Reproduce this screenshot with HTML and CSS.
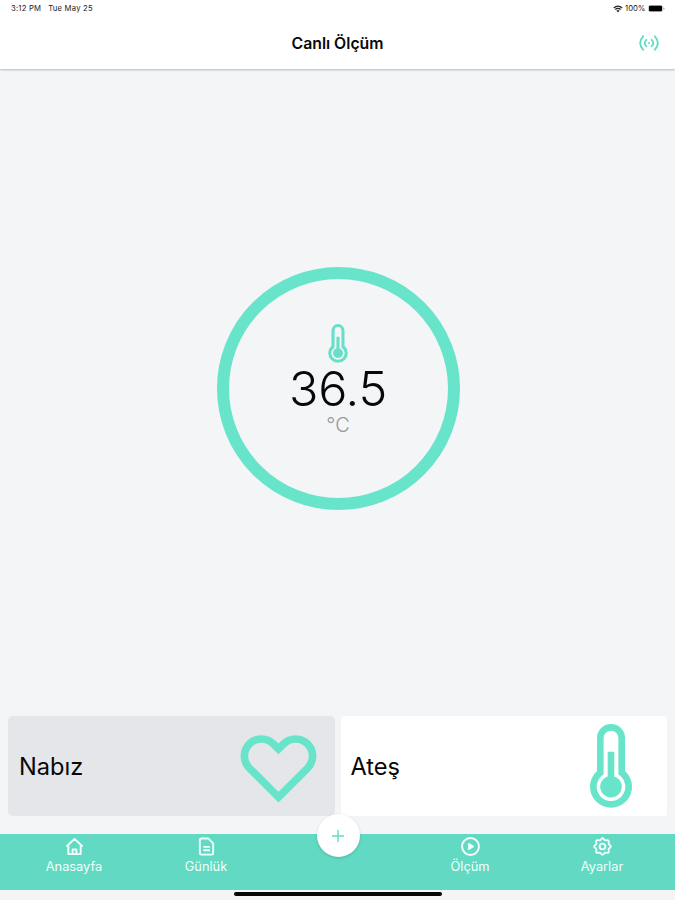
FILE: index.html
```html
<!DOCTYPE html>
<html lang="tr">
<head>
<meta charset="utf-8">
<title>Canlı Ölçüm</title>
<link rel="stylesheet" href="styles.css">
</head>
<body>
<svg class="defs" width="0" height="0">
  <symbol id="thermometer" viewBox="0 0 42 84">
    <path d="M21 0A14 14 0 0 0 7 14V47A21 21 0 1 0 35 47V14A14 14 0 0 0 21 0ZM21 6.7A7.4 7.4 0 0 1 28.4 14V50.5A14.3 14.3 0 1 1 13.6 50.5V14A7.4 7.4 0 0 1 21 6.7Z" fill-rule="evenodd"/>
    <path d="M17.7 27.7H24.3V52.4A10.8 10.8 0 1 1 17.7 52.4Z"/>
  </symbol>
</svg>
<div class="screen">
  <header class="header">
    <div class="status">
      <div class="status-left"><span class="time">3:12 PM</span><span class="date">Tue May 25</span></div>
      <div class="status-right">
        <svg class="wifi" viewBox="0 0 10 8"><path d="M5 7.5L3.4 5.5Q5 4.3 6.6 5.5Z" fill="#222"/><path d="M.8 2.9Q5-.7 9.2 2.9M2.3 4.5Q5 2.4 7.7 4.5" fill="none" stroke="#222" stroke-width="1.3"/></svg>
        <span class="percent">100%</span>
        <svg class="battery" viewBox="0 0 17 7"><rect x=".3" y=".3" width="14.4" height="6.4" rx="1.5" fill="#bbb"/><rect x="1" y=".8" width="13" height="5.4" rx="1"/><rect x="15.4" y="2.4" width="1" height="2.2" rx=".5" fill="#999"/></svg>
      </div>
    </div>
    <div class="titlebar">
      <h1 class="title">Canlı Ölçüm</h1>
      <svg class="signal" viewBox="0 0 20 16"><path d="M4.1 1.3Q-1.8 8 4.1 14.7M15.9 1.3Q21.8 8 15.9 14.7M7.3 4.8Q4 8 7.3 11.2M12.7 4.8Q16 8 12.7 11.2"/><circle cx="10" cy="8" r="1"/></svg>
    </div>
  </header>

  <main class="main">
    <div class="gauge">
      <svg class="gauge-icon"><use href="#thermometer"/></svg>
      <div class="value">36.5</div>
      <div class="unit">°C</div>
    </div>
  </main>

  <section class="cards">
    <div class="card card-pulse">
      <span class="card-label">Nabız</span>
      <svg class="heart" viewBox="0 0 24 24"><path d="M4.318 6.318a4.5 4.5 0 0 0 0 6.364L12 20.364l7.682-7.682a4.5 4.5 0 0 0-6.364-6.364L12 7.636l-1.318-1.318a4.5 4.5 0 0 0-6.364 0z"/></svg>
    </div>
    <div class="card card-temp">
      <span class="card-label">Ateş</span>
      <svg class="thermo"><use href="#thermometer"/></svg>
    </div>
  </section>

  <nav class="nav">
    <div class="tab"><svg class="tab-icon" viewBox="0 0 20 20"><path d="M1.5 10L10 2l8.5 8M3.5 9v9h13V9M8 17.5v-4.3h4v4.3"/></svg><span>Anasayfa</span></div>
    <div class="tab"><svg class="tab-icon" viewBox="0 0 20 20"><path d="M4.5 1.5h7.3l5.2 5.2V17a1.5 1.5 0 0 1-1.5 1.5h-11A1.5 1.5 0 0 1 3 17V3a1.5 1.5 0 0 1 1.5-1.5zM6.6 10.4h7M6.6 14h7"/></svg><span>Günlük</span></div>
    <div class="tab tab-add"><div class="add"><svg viewBox="0 0 12 12"><path d="M6 0V12M0 6H12"/></svg></div></div>
    <div class="tab"><svg class="tab-icon" viewBox="0 0 20 20"><circle cx="10" cy="10" r="8.9"/><path d="M8.3 7.4L12.6 10l-4.3 2.6z" fill="currentColor"/></svg><span>Ölçüm</span></div>
    <div class="tab"><svg class="tab-icon" viewBox="0 0 20 20"><path d="M8 3Q10-.5 12 3Q12.6 3.7 13.6 3.5Q17.5 2.5 16.5 6.4Q16.3 7.4 17 8Q20.5 10 17 12Q16.3 12.6 16.5 13.6Q17.5 17.5 13.6 16.5Q12.6 16.3 12 17Q10 20.5 8 17Q7.4 16.3 6.4 16.5Q2.5 17.5 3.5 13.6Q3.7 12.6 3 12Q-.5 10 3 8Q3.7 7.4 3.5 6.4Q2.5 2.5 6.4 3.5Q7.4 3.7 8 3Z"/><circle cx="10" cy="10" r="3"/></svg><span>Ayarlar</span></div>
  </nav>
  <footer class="home-area"><div class="home-bar"></div></footer>
</div>
</body>
</html>
```

FILE: styles.css
```css
* { box-sizing: border-box; }
body { margin: 0; font-family: Inter, "Liberation Sans", sans-serif; color: #080808; }
.defs { position: absolute; }
.screen { display: flex; flex-direction: column; width: 675px; height: 900px; background: #f3f5f7; overflow: hidden; }

.header { height: 69px; flex: none; background: #fff; box-shadow: 0 1px 2px rgba(0, 0, 0, .25); }
.status { display: flex; justify-content: space-between; height: 17px; padding: 0 10px 0 11px; align-items: center; font-size: 7.7px; line-height: 10px; color: #222; }
.status-left { display: flex; gap: 7px; letter-spacing: .2px; }
.status-right { display: flex; align-items: center; }
.wifi { width: 10px; height: 8px; margin-right: 2px; }
.percent { width: 22px; }
.battery { width: 17px; height: 7px; margin-left: 1px; }
.titlebar { display: grid; grid-template-columns: 1fr auto 1fr; align-items: center; height: 52px; padding: 0 16px; }
.title { grid-column: 2; margin: 1px 0 0; font-size: 15.8px; font-weight: 600; line-height: 20px; }
.signal { justify-self: end; width: 20px; height: 16px; fill: none; stroke: #62dac3; stroke-width: 1.8; stroke-linecap: round; }
.signal circle { fill: #62dac3; stroke: none; }

.main { flex: 1; display: flex; justify-content: center; padding-top: 198px; }
.gauge { display: flex; flex-direction: column; align-items: center; width: 243px; height: 243px; margin-left: 1px; border: 12px solid #67e4ca; border-radius: 50%; padding-top: 45px; }
.gauge-icon { width: 20px; height: 39px; fill: #67e0c8; }
.value { font-size: 48.5px; line-height: 52px; font-weight: 300; letter-spacing: -.2px; }
.unit { font-size: 20px; line-height: 20px; font-weight: 300; color: #96989c; }

.cards { flex: none; display: grid; grid-template-columns: 1fr 1fr; gap: 6px; height: 100px; margin: 0 8px 18px; }
.card { display: flex; align-items: center; justify-content: space-between; border-radius: 5px; }
.card-pulse { background: #e5e6ea; padding: 0 11px 0 11px; }
.card-temp { background: #fff; padding: 0 35px 0 10px; border-radius: 3px; }
.card-label { font-size: 23.6px; line-height: 30px; font-weight: 400; padding-top: 2px; }
.heart { width: 91px; height: 91px; margin-bottom: 1px; fill: none; stroke: #67e4ca; stroke-width: 2; }
.thermo { width: 42px; height: 84px; fill: #67e4ca; }

.nav { flex: none; display: grid; grid-template-columns: repeat(5, 1fr); height: 56px; padding: 0 7px 0 8px; background: #62dac3; color: #f0fffc; }
.tab { display: flex; flex-direction: column; align-items: center; padding-top: 3px; font-size: 12.8px; line-height: 18px; }
.tab-icon { width: 19px; height: 19px; margin-bottom: 2px; fill: none; stroke: currentColor; stroke-width: 2; stroke-linejoin: round; }
.tab-add { padding: 0; }
.add { display: flex; align-items: center; justify-content: center; width: 43px; height: 43px; flex: none; margin-top: -20px; border-radius: 50%; background: #fff; box-shadow: 0 1px 3px rgba(0, 0, 0, .18); }
.add svg { width: 12px; height: 12px; stroke: #62dac3; stroke-width: 1.4; }
.home-area { flex: none; display: flex; justify-content: center; height: 10px; padding-top: 2px; background: #f5f5f5; }
.home-bar { width: 208px; height: 4px; border-radius: 2px; background: #050505; }
```
